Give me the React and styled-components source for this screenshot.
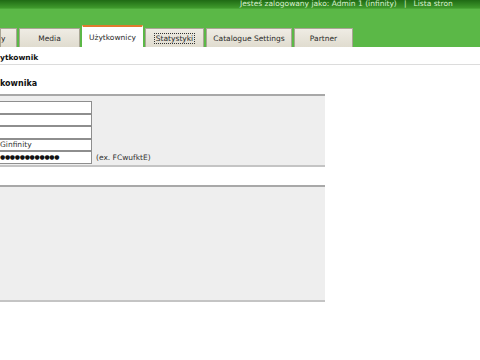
import React from "react";
import styled, { createGlobalStyle } from "styled-components";

const Global = createGlobalStyle`
  html, body { margin: 0; padding: 0; background: #fff; }
  body { font-family: "DejaVu Sans", Verdana, sans-serif; width: 480px; height: 360px; overflow: hidden; }
`;

const Header = styled.div`
  background: #5bb847;
  height: 47px;
  display: flex;
  flex-direction: column;
`;

const TopStrip = styled.div`
  height: 8px;
  background: linear-gradient(#1f6a14, #3f9a2c);
  display: flex;
  justify-content: flex-start;
  padding-left: 240px;
  overflow: hidden;
  border-bottom: 1px solid #4aa637;
`;

const UserInfo = styled.div`
  font-size: 7.5px;
  line-height: 7px;
  color: #d9f0cf;
  white-space: nowrap;
`;

const Tabs = styled.div`
  margin-top: auto;
  display: flex;
  align-items: flex-end;
  gap: 2px;
`;

const Tab = styled.div`
  width: ${(p) => p.$w}px;
  height: ${(p) => (p.$active ? 22 : 19)}px;
  box-sizing: border-box;
  display: flex;
  align-items: center;
  justify-content: ${(p) => (p.$align === "left" ? "flex-start" : "center")};
  font-size: 7.5px;
  color: #2a2a2a;
  background: ${(p) => (p.$active ? "#fff" : "linear-gradient(#efece4, #e0dccf)")};
  border: 1px solid ${(p) => (p.$active ? "#fff" : "#a9a594")};
  border-bottom: none;
  border-top: ${(p) => (p.$active ? "2px solid #e07a2e" : "1px solid #a9a594")};
  white-space: nowrap;
  overflow: hidden;
`;

const Focused = styled.span`
  outline: 1px dotted #333;
  padding: 0 1px;
`;

const SubTitle = styled.div`
  font-size: 7.5px;
  font-weight: bold;
  color: #111;
  padding: 6px 0 2px 0;
  border-bottom: 1px solid #dcdcdc;
`;

const SectionTitle = styled.div`
  font-size: 8px;
  font-weight: bold;
  color: #111;
  padding: 14px 0 6px 0;
`;

const Panel = styled.div`
  width: 325px;
  height: ${(p) => p.$h}px;
  box-sizing: border-box;
  background: #eeeeee;
  border-top: 2px solid #a8a8a8;
  border-bottom: 2px solid #c4c4c4;
  padding-top: 5px;
  display: flex;
  flex-direction: column;
`;

const Row = styled.div`
  display: flex;
  align-items: center;
  height: 12.5px;
`;

const Field = styled.div`
  width: 92px;
  height: 12.5px;
  box-sizing: border-box;
  background: #fff;
  border: 1px solid #8e8e8e;
  border-left: none;
  font-size: 7.5px;
  line-height: 10.5px;
  color: #333;
  overflow: hidden;
  white-space: nowrap;
`;

const Dots = styled.span`
  font-size: 6px;
  letter-spacing: -0.3px;
  color: #111;
`;

const Hint = styled.span`
  font-size: 7.5px;
  color: #333;
  margin-left: 4px;
`;

const Spacer = styled.div`
  height: 18px;
`;

export default function App() {
  return (
    <>
      <Global />
      <Header>
        <TopStrip>
          <UserInfo>Jesteś zalogowany jako: Admin 1 (infinity) &nbsp;&nbsp;|&nbsp;&nbsp; Lista stron</UserInfo>
        </TopStrip>
        <Tabs>
          <Tab $w={17} $align="left">y</Tab>
          <Tab $w={61}>Media</Tab>
          <Tab $w={61} $active>Użytkownicy</Tab>
          <Tab $w={59}><Focused>Statystyki</Focused></Tab>
          <Tab $w={86}>Catalogue Settings</Tab>
          <Tab $w={59}>Partner</Tab>
        </Tabs>
      </Header>
      <SubTitle>ytkownik</SubTitle>
      <SectionTitle>kownika</SectionTitle>
      <Panel $h={73}>
        <Row><Field /></Row>
        <Row><Field /></Row>
        <Row><Field /></Row>
        <Row><Field>Ginfinity</Field></Row>
        <Row>
          <Field><Dots>●●●●●●●●●●●●</Dots></Field>
          <Hint>(ex. FCwufktE)</Hint>
        </Row>
      </Panel>
      <Spacer />
      <Panel $h={117} />
    </>
  );
}
